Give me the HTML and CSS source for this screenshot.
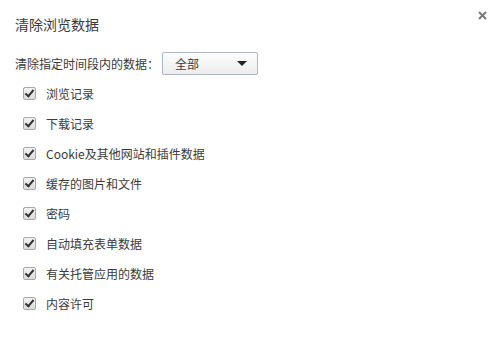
FILE: index.html
```html
<!DOCTYPE html>
<html>
    <head>
        <title>清除浏览数据</title>
        <meta charset="utf-8">
        <link rel="stylesheet" href="styles.css">
    </head>
    <body>
        <div class="dialog">
            <div class="close">
                <svg width="9" height="9" viewBox="0 0 9 9"><path d="M1 1L8 8M8 1L1 8" stroke="#7a7a7a" stroke-width="2"/></svg>
            </div>
            <div class="title">清除浏览数据</div>
            <div class="range">
                <span class="range-label">清除指定时间段内的数据：</span>
                <div class="select">
                    <span>全部</span>
                    <span class="arrow"></span>
                </div>
            </div>
            <ul class="items">
                <li><span class="check"></span>浏览记录</li>
                <li><span class="check"></span>下载记录</li>
                <li><span class="check"></span>Cookie及其他网站和插件数据</li>
                <li><span class="check"></span>缓存的图片和文件</li>
                <li><span class="check"></span>密码</li>
                <li><span class="check"></span>自动填充表单数据</li>
                <li><span class="check"></span>有关托管应用的数据</li>
                <li><span class="check"></span>内容许可</li>
            </ul>
        </div>
    </body>
</html>
```

FILE: styles.css
```css
body {
    margin: 0;
    background: #fff;
    font-family: "Noto Sans CJK SC", "Noto Sans", sans-serif;
    color: #3a3a3a;
}
.dialog {
    position: relative;
    padding: 14px 15px;
}
.close {
    position: absolute;
    top: 11px;
    right: 3px;
    width: 9px;
    height: 9px;
    line-height: 0;
}
.title {
    font-size: 14px;
    line-height: 20px;
    height: 20px;
}
.range {
    display: flex;
    align-items: center;
    margin-top: 18px;
    font-size: 12px;
}
.range-label {
    width: 147px;
}
.select {
    display: flex;
    align-items: center;
    justify-content: space-between;
    box-sizing: border-box;
    width: 96px;
    height: 23px;
    padding: 0 10px 0 12px;
    border: 1px solid #aab8cc;
    border-radius: 2px;
    background: linear-gradient(#fdfdfd, #ededed);
}
.arrow {
    width: 0;
    height: 0;
    border-left: 5px solid transparent;
    border-right: 5px solid transparent;
    border-top: 5px solid #222;
}
.items {
    list-style: none;
    margin: 3px 0 0;
    padding: 0 0 0 8px;
    font-size: 12px;
}
.items li {
    display: flex;
    align-items: center;
    height: 30px;
}
.check {
    position: relative;
    box-sizing: border-box;
    width: 13px;
    height: 13px;
    margin-right: 10px;
    border: 1px solid #a8a8a8;
    border-radius: 2px;
    background: linear-gradient(#f2f2f2, #dcdcdc);
}
.check::after {
    content: "";
    position: absolute;
    left: 3px;
    top: 0px;
    width: 3px;
    height: 7px;
    border-right: 2px solid #333;
    border-bottom: 2px solid #333;
    transform: rotate(40deg);
}
```
